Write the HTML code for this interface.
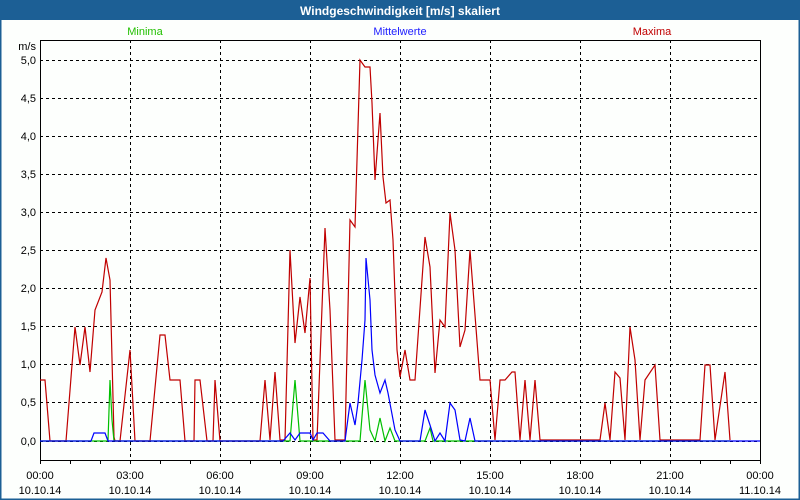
<!DOCTYPE html>
<html><head><meta charset="utf-8"><style>
body{margin:0;width:800px;height:500px;overflow:hidden;background:#fff;font-family:"Liberation Sans",sans-serif}
</style></head><body>
<svg width="800" height="500" xmlns="http://www.w3.org/2000/svg" style="display:block">
<rect x="0" y="0" width="800" height="500" fill="#fdfffd"/>
<rect x="0" y="0" width="800" height="20" fill="#1c5f95"/>
<rect x="0.5" y="0.5" width="799" height="499" fill="none" stroke="#1c5f95" stroke-width="2"/>
<text x="400" y="15" text-anchor="middle" font-size="12" font-weight="bold" fill="#fff">Windgeschwindigkeit [m/s] skaliert</text>
<g font-size="11">
<text x="145" y="35" text-anchor="middle" fill="#22c000">Minima</text>
<text x="400" y="35" text-anchor="middle" fill="#2020ff">Mittelwerte</text>
<text x="652" y="35" text-anchor="middle" fill="#c00000">Maxima</text>
</g>
<g stroke="#000" stroke-width="1" stroke-dasharray="3,3" fill="none">
<path d="M40 60.5H760M40 98.5H760M40 136.5H760M40 174.5H760M40 212.5H760M40 250.5H760M40 288.5H760M40 326.5H760M40 364.5H760M40 402.5H760"/>
<path d="M130.5 40V460M220.5 40V460M310.5 40V460M400.5 40V460M490.5 40V460M580.5 40V460M670.5 40V460"/>
</g>
<path d="M40 441.5H760" stroke="#000" stroke-dasharray="3,3"/>
<rect x="40.5" y="40.5" width="720" height="420" fill="none" stroke="#000"/>
<path d="M40.5 461V464M70.5 461V464M100.5 461V464M130.5 461V464M160.5 461V464M190.5 461V464M220.5 461V464M250.5 461V464M280.5 461V464M310.5 461V464M340.5 461V464M370.5 461V464M400.5 461V464M430.5 461V464M460.5 461V464M490.5 461V464M520.5 461V464M550.5 461V464M580.5 461V464M610.5 461V464M640.5 461V464M670.5 461V464M700.5 461V464M730.5 461V464M760.5 461V464" stroke="#000"/>
<g font-size="11" fill="#000" text-anchor="end">
<text x="36" y="50">m/s</text>
<text x="36" y="64">5,0</text><text x="36" y="102">4,5</text><text x="36" y="140">4,0</text><text x="36" y="178">3,5</text><text x="36" y="216">3,0</text><text x="36" y="254">2,5</text><text x="36" y="292">2,0</text><text x="36" y="330">1,5</text><text x="36" y="368">1,0</text><text x="36" y="406">0,5</text><text x="36" y="445">0,0</text>
</g>
<g font-size="11" fill="#000" text-anchor="middle">
<text x="40" y="479">00:00</text><text x="40" y="494">10.10.14</text>
<text x="130" y="479">03:00</text><text x="130" y="494">10.10.14</text>
<text x="220" y="479">06:00</text><text x="220" y="494">10.10.14</text>
<text x="310" y="479">09:00</text><text x="310" y="494">10.10.14</text>
<text x="400" y="479">12:00</text><text x="400" y="494">10.10.14</text>
<text x="490" y="479">15:00</text><text x="490" y="494">10.10.14</text>
<text x="580" y="479">18:00</text><text x="580" y="494">10.10.14</text>
<text x="670" y="479">21:00</text><text x="670" y="494">10.10.14</text>
<text x="760" y="479">00:00</text><text x="760" y="494">11.10.14</text>
</g>
<polyline fill="none" stroke="#c00000" stroke-width="1.2" points="40,380 45,380 50,441 66,441 75,327 80,365 85,327 90,372 95,310 102,292 106,258 110,280 114,437 115,441 120,441 130,350 135,441 150,441 160,335 165,335 170,380 180,380 185,441 194,441 195,380 200,380 207,441 213,441 215,380 220,441 260,441 265,380 270,440 275,372 280,440 285,440 290,250 295,343 300,297 305,333 310,278 313,440 317,440 325,228 330,310 335,440 345,440 350,220 355,227 360,60 365,67 370,67 372,103 375,180 380,113 383,177 386,203 390,200 393,240 397,350 400,377 405,350 410,380 415,380 425,237 430,267 435,373 440,320 445,327 450,213 455,250 460,347 465,330 470,250 480,380 490,380 495,440 500,380 505,380 512,372 515,372 520,440 525,380 530,440 535,380 540,440 600,440 605,403 610,440 615,372 620,378 625,440 630,327 635,360 640,440 645,380 655,365 660,440 700,440 705,365 710,365 715,440 725,372 730,440"/>
<polyline fill="none" stroke="#00c000" stroke-width="1.2" points="40,441 108,441 110,380 112,420 114,441 290,441 295,380 300,441 360,441 365,380 370,430 375,441 380,418 385,441 390,428 395,441 425,441 430,428 433,441 730,441"/>
<polyline fill="none" stroke="#0000ff" stroke-width="1.2" points="40,441 91,441 94,433 105,433 108,441 283,441 290,433 295,440 300,433 310,433 313,440 317,433 323,433 330,441 345,441 350,403 355,425 358,403 362,360 365,320 366,258 370,300 372,350 375,375 380,393 385,380 388,393 395,430 400,441 420,441 425,410 430,425 435,441 440,433 445,441 450,403 455,410 460,440 465,441 470,418 475,441 760,441"/>
</svg>
</body></html>
